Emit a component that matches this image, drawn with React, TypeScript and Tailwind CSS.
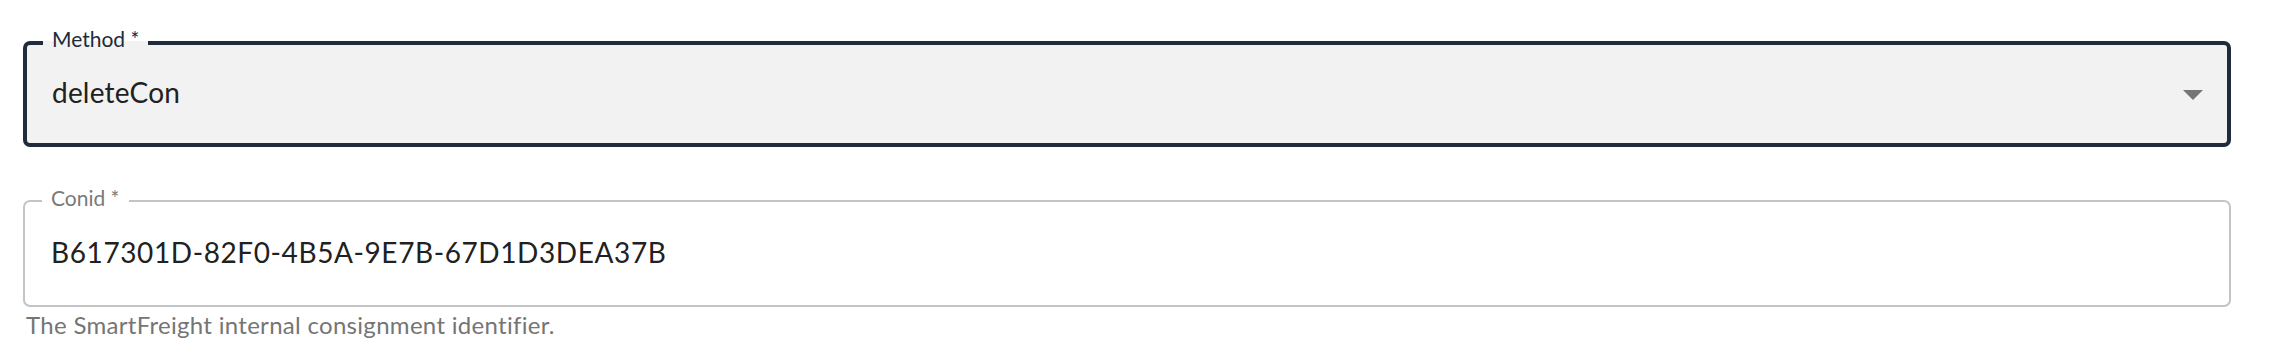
import React from 'react'

const font = { fontFamily: 'Lato, "Noto Sans", sans-serif' }

export default function App() {
  return (
    <div className="w-full h-[364px] bg-white pl-[23px] pr-[43px] pt-[27px]" style={font}>
      {/* Method select */}
      <fieldset className="m-0 min-w-0 border-4 border-[#202b3b] rounded-[7px] bg-[#f2f2f2] px-[16px] pt-0 pb-0">
        <legend className="px-[9px] pb-[8px] text-[21px] leading-[24px] text-[#202b3b]">Method *</legend>
        <div className="flex items-center justify-between pl-[9px] pr-[8px] pt-[13px] pb-[31px]">
          <span className="text-[28px] leading-[40px] tracking-[0.2px] text-[#212121]">deleteCon</span>
          <svg width="20" height="10" viewBox="0 0 20 10" className="mt-[6px]">
            <path d="M0 0h20L10 10z" fill="#757575" />
          </svg>
        </div>
      </fieldset>

      {/* Conid input */}
      <fieldset className="m-0 mt-[39px] min-w-0 border-2 border-[#c4c4c4] rounded-[7px] bg-white px-[17px] pt-0 pb-0">
        <legend className="px-[9px] pb-[6px] text-[21px] leading-[24px] text-[#7a7a7a]">Conid *</legend>
        <div className="pl-[9px] pt-[16px] pb-[33px]">
          <span className="text-[28px] leading-[40px] tracking-[0.6px] text-[#212121]">B617301D-82F0-4B5A-9E7B-67D1D3DEA37B</span>
        </div>
      </fieldset>
      <p className="mt-[4px] pl-[3px] text-[24px] leading-[28px] tracking-[0.3px] text-[#757575]">
        The SmartFreight internal consignment identifier.
      </p>
    </div>
  )
}
